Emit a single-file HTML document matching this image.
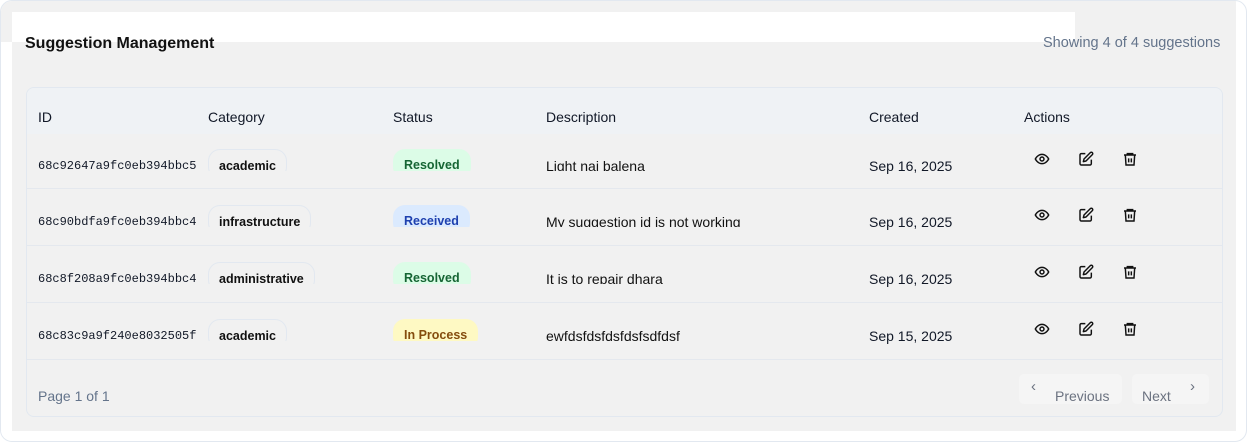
<!DOCTYPE html>
<html><head><style>
*{margin:0;padding:0;box-sizing:border-box}
body{width:1248px;height:443px;background:#fff;font-family:"Liberation Sans",sans-serif;position:relative;overflow:hidden;color:#111827}
.outer{position:absolute;left:0;top:0;width:1247px;height:442px;border:1px solid #e2e8f0;border-radius:12px;overflow:hidden;background:#fff}
.gray{position:absolute;left:-1px;top:-1px;width:1236px;height:431px;background:#f1f1f1}
.leftw{position:absolute;left:-1px;top:41px;width:12px;height:400px;background:#fff}
.whitetop{position:absolute;left:11px;top:11px;width:1063px;height:30px;background:#fff}
.abs{position:absolute;white-space:nowrap}
.title{left:24px;top:34px;font-size:16px;font-weight:bold;color:#111}
.showing{left:1042px;top:34px;font-size:14.5px;color:#64748b}
.card{position:absolute;left:25px;top:86px;width:1197px;height:330px;border:1px solid #e2e8f0;border-radius:8px;overflow:hidden}
.head{position:absolute;left:0;top:0;width:100%;height:46px;background:#eff2f5}
.row{position:absolute;left:0;width:100%;height:57px;border-bottom:1.5px solid #e4e8ee}
.h{font-size:14px;top:21px}
.clip{position:absolute;overflow:hidden;height:22px;top:16px}
.mono{font-family:"Liberation Mono",monospace;font-size:12px;top:26px}
.cat{border:1px solid #e2e8f0;border-radius:12px;height:30px;padding:9px 10px 0;font-size:12.5px;font-weight:bold;color:#111}
.badge{border-radius:12px;height:30px;padding:9px 11px 0;font-size:12.5px;font-weight:bold}
.desc{font-size:14px;color:#111;padding-top:7px;height:23px;overflow:hidden}
.date{font-size:14px;top:25px}
.ic{position:absolute;top:18px}
.btn{position:absolute;top:286px;height:30px;background:#f5f5f5;border-radius:5px;font-size:14px;color:#6b7280}
</style></head><body>
<div class="outer">
<div class="gray"></div><div class="leftw"></div>
<div class="whitetop"></div>
<div class="abs title">Suggestion Management</div>
<div class="abs showing">Showing 4 of 4 suggestions</div>
<div class="card">
<div class="head">
<div class="abs h" style="left:11px">ID</div>
<div class="abs h" style="left:181px">Category</div>
<div class="abs h" style="left:366px">Status</div>
<div class="abs h" style="left:519px">Description</div>
<div class="abs h" style="left:842px">Created</div>
<div class="abs h" style="left:997px">Actions</div>
</div>
<div class="row" style="top:45px;height:56px">
<div class="abs mono" style="left:11px">68c92647a9fc0eb394bbc5</div>
<div class="clip" style="left:181px"><div class="cat">academic</div></div>
<div class="clip" style="left:366px"><div class="badge" style="background:#dcfce7;color:#166534">Resolved</div></div>
<div class="clip" style="left:519px;top:18px;height:20px"><div class="desc">Light nai balena</div></div>
<div class="abs date" style="left:842px">Sep 16, 2025</div>
<div class="ic" style="left:1007px"><svg width="16" height="16" viewBox="0 0 24 24" fill="none" stroke="#111" stroke-width="2.2"><path d="M2 12s3.5-7 10-7 10 7 10 7-3.5 7-10 7S2 12 2 12z"/><circle cx="12" cy="12" r="3"/></svg></div>
<div class="ic" style="left:1051px"><svg width="16" height="16" viewBox="0 0 24 24" fill="none" stroke="#111" stroke-width="2.2" stroke-linejoin="round"><path d="M11 4H5a2 2 0 0 0-2 2v13a2 2 0 0 0 2 2h13a2 2 0 0 0 2-2v-6"/><path d="M18.5 2.5a2.1 2.1 0 0 1 3 3L12 15l-4 1 1-4z"/></svg></div>
<div class="ic" style="left:1095px"><svg width="16" height="16" viewBox="0 0 24 24" fill="none" stroke="#111" stroke-width="2.2"><path d="M3 6h18M8 6V4h8v2M5 6l1 15h12l1-15M10 11v6M14 11v6"/></svg></div>
</div>
<div class="row" style="top:101px">
<div class="abs mono" style="left:11px">68c90bdfa9fc0eb394bbc4</div>
<div class="clip" style="left:181px"><div class="cat">infrastructure</div></div>
<div class="clip" style="left:366px"><div class="badge" style="background:#dbeafe;color:#1e40af">Received</div></div>
<div class="clip" style="left:519px;top:18px;height:20px"><div class="desc">My suggestion id is not working</div></div>
<div class="abs date" style="left:842px">Sep 16, 2025</div>
<div class="ic" style="left:1007px"><svg width="16" height="16" viewBox="0 0 24 24" fill="none" stroke="#111" stroke-width="2.2"><path d="M2 12s3.5-7 10-7 10 7 10 7-3.5 7-10 7S2 12 2 12z"/><circle cx="12" cy="12" r="3"/></svg></div>
<div class="ic" style="left:1051px"><svg width="16" height="16" viewBox="0 0 24 24" fill="none" stroke="#111" stroke-width="2.2" stroke-linejoin="round"><path d="M11 4H5a2 2 0 0 0-2 2v13a2 2 0 0 0 2 2h13a2 2 0 0 0 2-2v-6"/><path d="M18.5 2.5a2.1 2.1 0 0 1 3 3L12 15l-4 1 1-4z"/></svg></div>
<div class="ic" style="left:1095px"><svg width="16" height="16" viewBox="0 0 24 24" fill="none" stroke="#111" stroke-width="2.2"><path d="M3 6h18M8 6V4h8v2M5 6l1 15h12l1-15M10 11v6M14 11v6"/></svg></div>
</div>
<div class="row" style="top:158px">
<div class="abs mono" style="left:11px">68c8f208a9fc0eb394bbc4</div>
<div class="clip" style="left:181px"><div class="cat">administrative</div></div>
<div class="clip" style="left:366px"><div class="badge" style="background:#dcfce7;color:#166534">Resolved</div></div>
<div class="clip" style="left:519px;top:18px;height:20px"><div class="desc">It is to repair dhara</div></div>
<div class="abs date" style="left:842px">Sep 16, 2025</div>
<div class="ic" style="left:1007px"><svg width="16" height="16" viewBox="0 0 24 24" fill="none" stroke="#111" stroke-width="2.2"><path d="M2 12s3.5-7 10-7 10 7 10 7-3.5 7-10 7S2 12 2 12z"/><circle cx="12" cy="12" r="3"/></svg></div>
<div class="ic" style="left:1051px"><svg width="16" height="16" viewBox="0 0 24 24" fill="none" stroke="#111" stroke-width="2.2" stroke-linejoin="round"><path d="M11 4H5a2 2 0 0 0-2 2v13a2 2 0 0 0 2 2h13a2 2 0 0 0 2-2v-6"/><path d="M18.5 2.5a2.1 2.1 0 0 1 3 3L12 15l-4 1 1-4z"/></svg></div>
<div class="ic" style="left:1095px"><svg width="16" height="16" viewBox="0 0 24 24" fill="none" stroke="#111" stroke-width="2.2"><path d="M3 6h18M8 6V4h8v2M5 6l1 15h12l1-15M10 11v6M14 11v6"/></svg></div>
</div>
<div class="row" style="top:215px">
<div class="abs mono" style="left:11px">68c83c9a9f240e8032505f</div>
<div class="clip" style="left:181px"><div class="cat">academic</div></div>
<div class="clip" style="left:366px"><div class="badge" style="background:#fef9c3;color:#854d0e">In Process</div></div>
<div class="clip" style="left:519px;top:18px;height:20px"><div class="desc">ewfdsfdsfdsfdsfsdfdsf</div></div>
<div class="abs date" style="left:842px">Sep 15, 2025</div>
<div class="ic" style="left:1007px"><svg width="16" height="16" viewBox="0 0 24 24" fill="none" stroke="#111" stroke-width="2.2"><path d="M2 12s3.5-7 10-7 10 7 10 7-3.5 7-10 7S2 12 2 12z"/><circle cx="12" cy="12" r="3"/></svg></div>
<div class="ic" style="left:1051px"><svg width="16" height="16" viewBox="0 0 24 24" fill="none" stroke="#111" stroke-width="2.2" stroke-linejoin="round"><path d="M11 4H5a2 2 0 0 0-2 2v13a2 2 0 0 0 2 2h13a2 2 0 0 0 2-2v-6"/><path d="M18.5 2.5a2.1 2.1 0 0 1 3 3L12 15l-4 1 1-4z"/></svg></div>
<div class="ic" style="left:1095px"><svg width="16" height="16" viewBox="0 0 24 24" fill="none" stroke="#111" stroke-width="2.2"><path d="M3 6h18M8 6V4h8v2M5 6l1 15h12l1-15M10 11v6M14 11v6"/></svg></div>
</div>
<div class="abs" style="left:11px;top:300px;font-size:14px;color:#64748b">Page 1 of 1</div>
<div class="btn" style="left:992px;width:103px"><span class="abs" style="left:12px;top:4px;font-size:15px">&#8249;</span><span class="abs" style="left:36px;top:14px">Previous</span></div>
<div class="btn" style="left:1105px;width:77px"><span class="abs" style="left:10px;top:14px">Next</span><span class="abs" style="left:58px;top:4px;font-size:15px">&#8250;</span></div>
</div>
</div>
</body></html>
